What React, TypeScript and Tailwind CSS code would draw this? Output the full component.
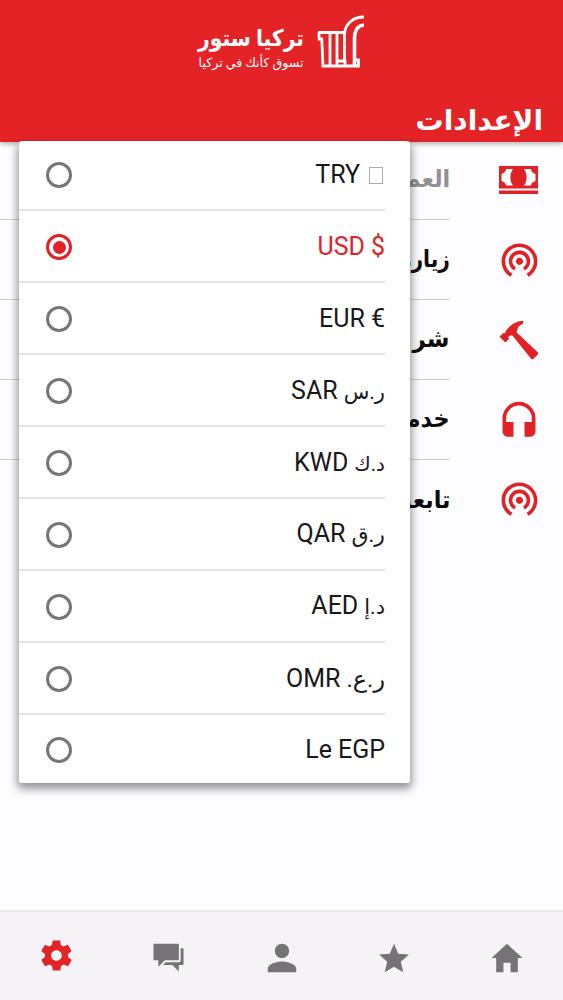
import { useState } from 'react';
import type { ReactNode } from 'react';
import { IoMdChatboxes, IoMdHammer, IoMdHome, IoMdPerson, IoMdSettings, IoMdStar } from 'react-icons/io';
import { MdHeadset, MdWifiTethering } from 'react-icons/md';
import clsx from 'clsx';

interface Currency {
  code: string;
  symbol: ReactNode;
  symbolClass?: string;
}

function CashIcon() {
  return (
    <svg className="w-[39px] h-[28px] mr-[3px]" viewBox="0 0 39 28">
      <path fill="currentColor" d="M0 0H39V22.500H0ZM0 24.500H39V28H0Z" />
      <path fill="white" d="M7 3H14C10.500 8 10.500 15 14 19.500H7C7 17.500 5 15.500 2.500 15V8C5 7.500 7 5.500 7 3Z" />
      <path fill="white" d="M32 3H25C28.500 8 28.500 15 25 19.500H32C32 17.500 34 15.500 36.500 15V8C34 7.500 32 5.500 32 3Z" />
    </svg>
  );
}

const currencies: Currency[] = [
  { code: 'TRY', symbol: <span className="inline-block w-[14px] h-[17px] ml-[3px] mr-[2px] -mb-[1px] border border-[#aaa8ab]" /> },
  { code: 'USD', symbol: '$' },
  { code: 'EUR', symbol: '€' },
  { code: 'SAR', symbol: 'ر.س', symbolClass: 'text-[21px]' },
  { code: 'KWD', symbol: 'د.ك', symbolClass: 'text-[20px]' },
  { code: 'QAR', symbol: 'ر.ق', symbolClass: 'text-[22px]' },
  { code: 'AED', symbol: 'د.إ', symbolClass: 'text-[21px]' },
  { code: 'OMR', symbol: 'ر.ع.', symbolClass: 'text-[24px]' },
  { code: 'Le', symbol: 'EGP' },
];

const settings = [
  { label: 'العملة', icon: <CashIcon />, muted: true },
  { label: 'زيارة', icon: <MdWifiTethering className="w-[43px] h-[43px] -mt-[2px]" />, labelClass: 'scale-x-[0.84]' },
  { label: 'شر', icon: <IoMdHammer className="w-[44px] h-[44px]" />, labelClass: 'scale-x-[0.96]' },
  { label: 'خدمة', icon: <MdHeadset className="w-[44px] h-[44px] mt-[3px]" /> },
  { label: 'تابعنا', icon: <MdWifiTethering className="w-[43px] h-[43px] -mt-[4px]" /> },
];

const tabs = [
  { name: 'home', icon: <IoMdHome className="w-[38px] h-[38px] mt-[3px]" /> },
  { name: 'favorites', icon: <IoMdStar className="w-[38px] h-[38px] mt-[3px]" /> },
  { name: 'account', icon: <IoMdPerson className="w-[38px] h-[38px] mt-[3px]" /> },
  { name: 'chat', icon: <IoMdChatboxes className="w-[37px] h-[37px] mt-[2px]" /> },
  { name: 'settings', icon: <IoMdSettings className="w-[37px] h-[37px] -mt-[2px]" /> },
];

function Logo() {
  return (
    <div className="flex justify-center items-start pt-[14px]" dir="rtl">
      <svg className="w-[48px] h-[56px] shrink-0" viewBox="0 0 48 56" fill="none" stroke="white" strokeWidth="2.800">
        <path d="M1 18.500H27M1 25H6M2 18.500V25M4.800 25L6 52H41.500V46H38" />
        <path d="M13 19V52M20 19V52M20 47H28V52" />
        <path d="M27.500 47V20C28 10 36 3 47 3" />
        <path d="M37.500 51V24C38 15 41 11.500 47 11" strokeWidth="3.600" />
      </svg>
      <div className="mr-[13px] pt-[9px] w-[105px] text-white">
        <div className="h-[31px] text-[23px] leading-[31px] font-bold whitespace-nowrap origin-right scale-x-[0.885]">تركيا ستور</div>
        <div className="text-[12.600px] leading-[17px] whitespace-nowrap">تسوق كأنك في تركيا</div>
      </div>
    </div>
  );
}

function SettingsList() {
  return (
    <ul className="flex-1 -mt-[2px]" dir="rtl">
      {settings.map((item, i) => (
        <li key={item.label} className="flex h-20">
          <div className="w-[113px] pr-[22px] flex items-center text-[#e02226] shrink-0">{item.icon}</div>
          <div
            className={clsx(
              'flex-1 flex items-center pb-[1px] text-[24px] font-bold',
              i < settings.length - 1 && 'border-b border-[#cfcdd0]',
              item.muted ? 'text-[#929093]' : 'text-[#0c0a0d]'
            )}
          >
            <span className={clsx('origin-right', item.labelClass ?? 'scale-x-[0.93]')}>{item.label}</span>
          </div>
        </li>
      ))}
    </ul>
  );
}

function CurrencyMenu() {
  const [selected, setSelected] = useState('USD');

  return (
    <div className="absolute left-[19px] top-[141px] w-[391px] h-[642px] bg-white rounded-[3px] overflow-hidden">
      <div className="-mt-[1.500px]">
        {currencies.map((c, i) => {
          const active = c.code === selected;
          return (
            <button
              key={c.code}
              onClick={() => setSelected(c.code)}
              className={clsx('w-full h-[71.900px] flex', active ? 'text-[#e02226]' : 'text-[#19171a]')}
            >
              <span
                className={clsx(
                  'flex-1 h-full mr-[25px] pl-[27px] flex items-center justify-between',
                  i < currencies.length - 1 ? 'pt-[2px] border-b-2 border-[#e5e3e6]' : 'pb-[1px]'
                )}
              >
                <span
                  className={clsx(
                    'w-[26px] h-[26px] rounded-full border-[3px] flex items-center justify-center',
                    active ? 'border-[#e02226]' : 'border-[#777578]'
                  )}
                >
                  {active && <span className="w-[13px] h-[13px] rounded-full bg-[#e02226]" />}
                </span>
                <span className="flex items-baseline gap-[6px] text-[25px] leading-[30px]">
                  <span>{c.code}</span>
                  <bdi className={c.symbolClass}>{c.symbol}</bdi>
                </span>
              </span>
            </button>
          );
        })}
      </div>
    </div>
  );
}

export default function App() {
  return (
    <div className="relative h-[1000px] w-[563px] flex flex-col overflow-hidden bg-[#fdfcfe] font-[Roboto,'DejaVu_Sans',sans-serif]">
      <header className="h-[142px] shrink-0 flex flex-col justify-between bg-[#e32326] shadow-[0_2px_5px_rgba(0,0,0,0.3)]">
        <Logo />
        <h1 className="pr-5 text-[28px] leading-[42px] font-bold text-white" dir="rtl">
          الإعدادات
        </h1>
      </header>

      <SettingsList />

      <nav className="h-[90px] shrink-0 flex items-center border-t-2 border-[#ebe9ec] bg-[#f5f3f6] text-[#757376]" dir="rtl">
        {tabs.map(tab => (
          <button
            key={tab.name}
            aria-label={tab.name}
            className={clsx('flex-1 flex justify-center', tab.name === 'settings' && 'text-[#e32326]')}
          >
            {tab.icon}
          </button>
        ))}
      </nav>

      <div className="absolute left-[19px] top-[143px] w-[391px] h-[640px] rounded-[3px] shadow-[0_4px_9px_2px_rgba(0,0,0,0.4)]" />
      <CurrencyMenu />
    </div>
  );
}
